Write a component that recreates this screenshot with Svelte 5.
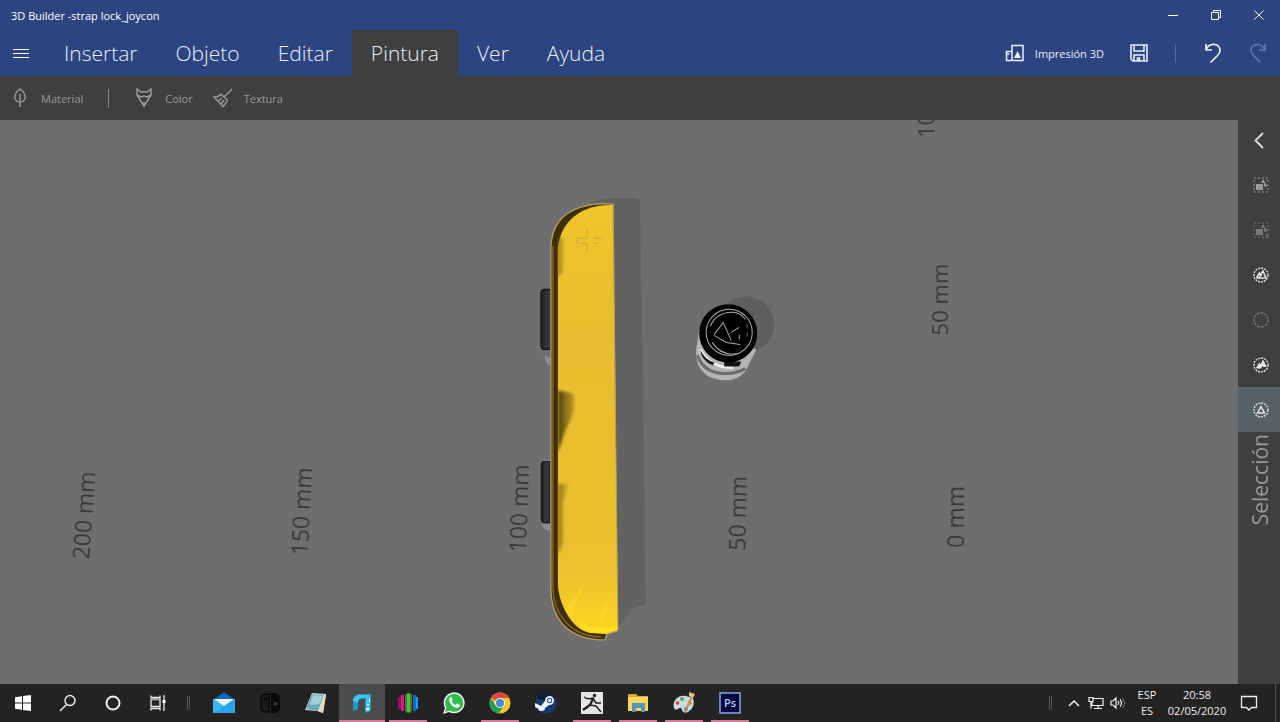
<script>
    let activeTab = $state('Pintura');
    let activeTool = $state('front');

    const tabs = ['Insertar', 'Objeto', 'Editar', 'Pintura', 'Ver', 'Ayuda'];

    const selectionTools = [
        { id: 'all', label: 'Seleccionar todo' },
        { id: 'none', label: 'Anular selección' },
        { id: 'group', label: 'Agrupar' },
        { id: 'ungroup', label: 'Desagrupar' },
        { id: 'multi', label: 'Selección múltiple' },
        { id: 'front', label: 'Selección única' }
    ];

    const rulers = [
        { text: '200 mm', x: 90, y: 560, angle: -86 },
        { text: '150 mm', x: 308, y: 556, angle: -87 },
        { text: '100 mm', x: 526, y: 553, angle: -88 },
        { text: '50 mm', x: 745, y: 551, angle: -89 },
        { text: '0 mm', x: 963, y: 548, angle: -90 },
        { text: '50 mm', x: 947, y: 336, angle: -90, far: true },
        { text: '100 mm', x: 933, y: 139, angle: -90, far: true }
    ];

    const apps = [
        { id: 'mail', label: 'Correo' },
        { id: 'switch', label: 'Switch' },
        { id: 'notepad', label: 'Bloc de notas' },
        { id: 'builder', label: '3D Builder', open: true, active: true },
        { id: 'bars', label: 'Biblioteca', open: true },
        { id: 'whatsapp', label: 'WhatsApp' },
        { id: 'chrome', label: 'Chrome', open: true },
        { id: 'steam', label: 'Steam' },
        { id: 'zbrush', label: 'ZBrush', open: true },
        { id: 'explorer', label: 'Explorador', open: true },
        { id: 'paint', label: 'Paint', open: true },
        { id: 'photoshop', label: 'Photoshop', open: true }
    ];
</script>

<div class="desktop">
    <header class="header">
        <div class="title-bar">
            <span class="title">3D Builder -strap lock_joycon</span>
            <div class="window-buttons">
                <button aria-label="Minimizar">
                    <svg width="12" height="12" viewBox="0 0 12 12"><path d="M1 6.500h10" /></svg>
                </button>
                <button aria-label="Restaurar">
                    <svg width="12" height="12" viewBox="0 0 12 12"><path d="M1.500 3.500h7v7h-7zM3.500 3.500v-2h7v7h-2" /></svg>
                </button>
                <button aria-label="Cerrar">
                    <svg width="12" height="12" viewBox="0 0 12 12"><path d="M1.500 1.500l9 9M10.500 1.500l-9 9" /></svg>
                </button>
            </div>
        </div>

        <div class="menu-bar">
            <button class="hamburger" aria-label="Menú">
                <svg width="16" height="12" viewBox="0 0 16 12"><path d="M0 2.500h16M0 6.500h16M0 10.500h16" /></svg>
            </button>
            <nav class="tabs">
                {#each tabs as tab}
                    <button class="tab" class:active={tab === activeTab} onclick={() => (activeTab = tab)}>{tab}</button>
                {/each}
            </nav>
            <div class="actions">
                <button class="print">
                    <svg width="20" height="20" viewBox="0 0 20 20">
                        <path stroke-width="1.500" d="M7 17.500V2.500h11v15zM7 8.500H1.500v9H7M1.500 11h3" />
                        <path fill="currentColor" stroke="none" d="M12.500 8l3.500 7H9z" />
                    </svg>
                    <span>Impresión 3D</span>
                </button>
                <button aria-label="Guardar">
                    <svg width="20" height="20" viewBox="0 0 20 20">
                        <path stroke-width="1.600" d="M2 2h16v16H4l-2-2zM5 2v6h10V2M5 18v-6h10v6M8.500 18v-3h2v3" />
                    </svg>
                </button>
                <span class="divider"></span>
                <button aria-label="Deshacer">
                    <svg width="20" height="22" viewBox="0 0 20 22">
                        <path stroke-width="1.700" d="M3 2v6h6M3 8C6 0 17 1 17 8.500c0 2-1 3.500-2.500 5L7.500 20.500" />
                    </svg>
                </button>
                <button class="redo" aria-label="Rehacer" disabled>
                    <svg width="20" height="22" viewBox="0 0 20 22">
                        <path stroke-width="1.500" d="M17 2v6h-6M17 8C14 0 3 1 3 8.500c0 2 1 3.500 2.500 5l7 7" />
                    </svg>
                </button>
            </div>
        </div>
    </header>

    <div class="toolbar">
        <button>
            <svg width="20" height="22" viewBox="0 0 20 22">
                <path stroke-width="1.500" d="M10 2C6 5 4.500 8 5 11c.5 3 3 4 5 4s4.500-1 5-4c.5-3-1-6-5-9zM10 7v13" />
            </svg>
            <span>Material</span>
        </button>
        <span class="divider"></span>
        <button>
            <svg width="20" height="22" viewBox="0 0 20 22">
                <path stroke-width="1.500" d="M3 2v6l7 11 7-11V2l-4 3H7L3 2zM3 8l4 2 3-1 3 1 4-2M8 16h4" />
            </svg>
            <span>Color</span>
        </button>
        <button>
            <svg width="20" height="22" viewBox="0 0 20 22">
                <path stroke-width="1.500" d="M19 2l-7.500 7.500M8 7l6.500 6.500M8 7c-1.500 2-4 3-7 3l9 9.500c1.500-2 3.500-4 4.500-6M5 14l4-3M8 17l3-4" />
            </svg>
            <span>Textura</span>
        </button>
    </div>

    <main class="workspace">
        <svg class="scene" viewBox="0 121 1238 563" preserveAspectRatio="xMidYMid slice" role="img" aria-label="Modelo 3D">
            <defs>
                <linearGradient id="body" x1="0" y1="0" x2="0" y2="1">
                    <stop offset="0" stop-color="#f0c42a" />
                    <stop offset="0.3" stop-color="#e7bd2f" />
                    <stop offset="0.85" stop-color="#ecc02e" />
                    <stop offset="1" stop-color="#fdd41f" />
                </linearGradient>
                <linearGradient id="shade">
                    <stop offset="0" stop-color="#493a0a" />
                    <stop offset="1" stop-color="#8b7119" stop-opacity="0.5" />
                </linearGradient>
                <linearGradient id="fade">
                    <stop offset="0" stop-color="#6b5510" stop-opacity="0.7" />
                    <stop offset="1" stop-color="#6b5510" stop-opacity="0" />
                </linearGradient>
                <filter id="soften"><feGaussianBlur stdDeviation="1.500" /></filter>
            </defs>

            {#each rulers as ruler}
                <text class="ruler" class:far={ruler.far} transform="translate({ruler.x} {ruler.y}) rotate({ruler.angle})">{ruler.text}</text>
            {/each}

            <!-- shadows on the bed -->
            <path fill="#626262" d="M590 204Q600 199 612 199L637 199Q640 200 640 208L646 600Q646 606 641 606Q632 606 626 618L617 628Z" />
            <circle cx="746" cy="325" r="28" fill="#5e5e5e" />

            <!-- side rails -->
            <path fill="#8c8c8c" d="M541 348l3 8 7 2v8q-6-2-6-8zM541 523l3 6 7 3v-9z" />
            <path fill="#262626" stroke="#111" d="M551 290h-7q-3 0-3 4v51q0 5 3 5h7z" />
            <path fill="#353535" d="M545 292h5v56h-5z" />
            <path fill="#262626" stroke="#888" d="M551 461h-7q-4 0-4 4v54q0 5 4 5h7z" />
            <path fill="#353535" stroke="#151515" d="M543 462h7v61h-7z" />

            <!-- strap body -->
            <path
                fill="#3d2f09"
                stroke="#b39c6c"
                stroke-width="1.400"
                d="M613 205C602 204 590 205 581 208Q552 217 551 248V588C551 622 571 640 605 640L607 634L617 631Z"
            />
            <path fill="none" stroke="#806326" stroke-width="1.500" d="M553 247V588C554 618 574 637 601 637" />
            <path fill="url(#body)" d="M613 206C575 205 559 229 558 250V583C558 602 571 630 590 633L606 634L618 630Z" />
            <path fill="none" stroke="#b79b51" d="M613 205L618 630" />
            <g filter="url(#soften)">
                <path fill="url(#fade)" d="M558 238h7v32l-7 8z" />
                <path fill="url(#shade)" d="M558 391l16 3v18l-10 23-6 18z" />
                <path fill="url(#fade)" d="M558 484h12l-7 17v42l-5 12z" />
            </g>
            <path fill="#ffe226" opacity="0.4" d="M565 610l20-28-14 34zM598 622l14-34-9 36z" />
            <path fill="#ffe81c" opacity="0.7" d="M575 621q17 10 42 5v4l-13 3-14-1z" />
            <path fill="none" stroke="#c7a63f" d="M587 229v10h-10v5h10v9M594 239h8M594 244h5" />

            <!-- analog stick -->
            <path fill="#b4b4b4" d="M699 330L696 351Q695 371 711 378Q733 386 745 372L756 350Z" />
            <path fill="none" stroke="#6c6c6c" stroke-width="3" d="M697 356Q704 374 724 374Q738 374 745 369" />
            <path fill="none" stroke="#eee" stroke-width="3" d="M700 350Q710 369 733 368" />
            <path fill="#151515" d="M700 350q4 10 14 13l-1 3q-12-5-13-16zM724 362h17l-2 5h-15z" />
            <circle cx="728" cy="334" r="29" fill="#000" />
            <g fill="none" stroke="#aaa">
                <circle cx="729" cy="333" r="23" />
                <path d="M710 327q6-14 22-14 8 0 13 7M712 343q9 14 25 11M714 336l12 7 14 2M714 335l9-12 8 18M731 333l8-5M739 335v5" />
                <path stroke="#666" stroke-dasharray="4 4" d="M747 325v16" />
            </g>
        </svg>

        <aside class="selection">
            <button class="collapse" aria-label="Contraer">
                <svg width="18" height="18" viewBox="0 0 18 18"><path stroke-width="1.800" d="M13 1L5.500 8.500 13 16" /></svg>
            </button>
            {#each selectionTools as tool}
                <button
                    class="tool {tool.id}"
                    class:active={tool.id === activeTool}
                    aria-label={tool.label}
                    onclick={() => (activeTool = tool.id)}
                >
                    <svg width="18" height="18" viewBox="0 0 18 18">
                        {#if tool.id === 'all' || tool.id === 'none'}
                            <path stroke-dasharray="2 2" d="M2 2h14v14H2z" />
                            <path fill="currentColor" stroke="none" d="M4 8h7v6H4zM11 3l4.500 7.500H12V7H9z" />
                            {#if tool.id === 'none'}
                                <path d="M13 13l4 4M17 13l-4 4" />
                            {/if}
                        {:else}
                            <circle cx="9" cy="9" r="7" stroke-width="1.300" stroke-dasharray={tool.id === 'ungroup' ? '3 1' : '2 1'} />
                            {#if tool.id === 'group'}
                                <path stroke-width="1.500" d="M4.500 12l3-5 2 3M7 12l4-7 3 7zM4.500 12H8" />
                            {:else if tool.id === 'multi'}
                                <path fill="currentColor" d="M4.500 12l3-5 1 2.500L11 4.500l3 6h-3l-1-2-1 3.500z" />
                            {:else if tool.id === 'front'}
                                <path stroke-width="1.500" d="M9 5.500l3.500 6.500h-7z" />
                            {/if}
                        {/if}
                    </svg>
                </button>
            {/each}
            <span class="panel-name">Selección</span>
        </aside>
    </main>

    <footer class="taskbar">
        <div class="system">
            <button aria-label="Inicio">
                <svg width="16" height="16" viewBox="0 0 16 16"><path fill="#fff" stroke="none" d="M0 2.300l7-1v6.200H0zM8 1.100L16 0v7.500H8zM0 8.500h7v6.200l-7-1zM8 8.500h8V16l-8-1.100z" /></svg>
            </button>
            <button aria-label="Buscar">
                <svg width="18" height="18" viewBox="0 0 18 18"><circle cx="11" cy="6.500" r="5" stroke-width="1.400" /><path stroke-width="1.400" d="M7.500 10.500L1 17" /></svg>
            </button>
            <button aria-label="Cortana">
                <svg width="18" height="18" viewBox="0 0 18 18"><circle cx="9" cy="9" r="6.500" stroke-width="2" /></svg>
            </button>
            <button aria-label="Vista de tareas">
                <svg width="18" height="18" viewBox="0 0 18 18">
                    <path stroke-width="1.300" d="M2 5.500h9v7H2zM2 1.500v2h9v-2M2 16.500v-2h9v2M15 1v16" />
                    <path fill="#aaa" stroke="none" d="M2 4h9v2H2z" />
                    <path fill="#fff" stroke="none" d="M13.500 6h3v3h-3z" />
                </svg>
            </button>
        </div>
        <span class="grip"></span>
        <div class="apps">
            {#each apps as app}
                <button class="app" class:open={app.open} class:active={app.active} aria-label={app.label}>
                    <svg width="24" height="24" viewBox="0 0 24 24">
                        {#if app.id === 'mail'}
                            <path fill="#1267bd" d="M1 9L12 1l11 8v13H1z" />
                            <path fill="#38b6f0" d="M1 8h22v14H1z" />
                            <path fill="#168be0" d="M1 22l22-14v14z" opacity="0.4" />
                            <path fill="#eaf4fb" d="M2 8h20l-10 7z" />
                        {:else if app.id === 'switch'}
                            <path fill="#1b1b1b" stroke="#090909" stroke-width="1.500" d="M11 3v18H8q-5 0-5-5V8q0-5 5-5z" />
                            <path fill="#090909" d="M13 2h3q6 0 6 6v8q0 6-6 6h-3z" />
                            <circle cx="7.500" cy="8" r="1.800" fill="#090909" />
                            <circle cx="17.500" cy="13" r="2" fill="#383838" />
                        {:else if app.id === 'notepad'}
                            <path fill="#d8dedc" d="M8 2l14 1-3 19-6-2-12-1z" />
                            <path fill="#67aabe" d="M8 3l12 1-6 16-12-2z" />
                            <path fill="#b2dbe1" d="M9 4l10 1-4 8-9 1z" opacity="0.8" />
                            <path fill="#e4d8bf" d="M20 4l2 0-3 18-5-2z" />
                        {:else if app.id === 'builder'}
                            <path fill="#159bc9" d="M3 20V10Q3 4 9 3h12v17l-6 2V8h-3q-4 0-4 4v6z" />
                            <path fill="#4cc4e8" d="M3 9Q4 5 9 4h11l-3 3h-5q-4 0-4 4v1l-5-2zM16 8l4-3v14l-4 2z" />
                            <path fill="#e9faff" d="M16 17h3v2h-3zM19 8h1v3h-1zM17 13h2v1h-2z" />
                        {:else if app.id === 'bars'}
                            <rect x="2" y="6" width="3" height="12" fill="#8d1469" />
                            <rect x="5" y="4" width="3" height="16" fill="#dc168b" />
                            <rect x="9" y="2" width="7" height="20" rx="3" fill="#35842f" />
                            <rect x="11" y="3" width="3" height="18" rx="1" fill="#64b83d" />
                            <rect x="17" y="4" width="3" height="16" fill="#1766cf" />
                            <rect x="20" y="6" width="2" height="12" fill="#1c9ee4" />
                        {:else if app.id === 'whatsapp'}
                            <path fill="#f2f5f2" d="M1 23l2-6a10.500 10.500 0 1 1 4 4z" />
                            <path fill="#32bd4b" d="M3 21l1.500-4.500a9 9 0 1 1 3 3z" />
                            <path fill="#fff" d="M8 6.500q1-1 1.700.3l.8 2-1 1.500q1.500 2.700 4.200 3.800l1.500-1.500 2.500 1.200c.7.500-.2 3-2.500 3C11 17 5.500 11 8 6.500z" />
                        {:else if app.id === 'chrome'}
                            <circle cx="12" cy="12" r="10.500" fill="#f5c92d" />
                            <path fill="#dd4b3c" d="M12 12L2.700 7Q5.500 1.500 12 1.500T21.500 7H12z" />
                            <path fill="#279d55" d="M2.700 7A10.500 10.500 0 0 0 11 22.500l4.500-8L8 15z" />
                            <circle cx="12" cy="12" r="5" fill="#f3f3f3" />
                            <circle cx="12" cy="12" r="4" fill="#4a86d9" />
                        {:else if app.id === 'steam'}
                            <circle cx="12" cy="12" r="10.500" fill="#173b6c" />
                            <path fill="#101f3c" d="M2.500 7.500a10.500 10.500 0 0 1 19 0L12 10z" />
                            <path fill="#f1f5f8" d="M1 12l6 3 4-5a4.500 4.500 0 1 1 4 4l-4 3q0 3-3.500 3-3 0-3.500-2.500L1 16z" />
                            <circle cx="15.500" cy="9.500" r="2.700" fill="#245083" />
                            <circle cx="15.500" cy="9.500" r="1.800" fill="#d9e5ee" />
                        {:else if app.id === 'zbrush'}
                            <path fill="#e5e5e5" d="M1 1h22v22H1z" />
                            <circle cx="14.500" cy="4.500" r="1.700" fill="#222" />
                            <path fill="none" stroke="#222" stroke-width="1.500" d="M4 6q4 3 9 1l3 5h5M10 14l6 1 5 6" />
                            <path fill="none" stroke="#222" stroke-width="2.500" d="M13 8l-3 6-7 5" />
                        {:else if app.id === 'explorer'}
                            <path fill="#dba831" d="M2 3h8l2 2h10v15H2z" />
                            <path fill="#f9d65f" d="M2 6h20v14H2z" />
                            <path fill="#5595b9" d="M6 12h13v9h-4v-4h-5v4H6z" />
                        {:else if app.id === 'paint'}
                            <path fill="#c8dce4" d="M14 5C5 3 0 11 2 17q1 3 4 1 3-3 4 1 1 4 6 2 8-5 5-14z" />
                            <circle cx="10" cy="8" r="2" fill="#5ba25a" />
                            <circle cx="5.500" cy="12" r="1.800" fill="#d64934" />
                            <circle cx="18" cy="12" r="2" fill="#d9912b" />
                            <circle cx="14" cy="18" r="2" fill="#3d7bc0" />
                            <path fill="none" stroke="#c98e49" stroke-width="2" d="M13 21L20 5" />
                            <path fill="#e4bd8a" d="M17 1l6 2-2 4-4-2z" />
                        {:else if app.id === 'photoshop'}
                            <path fill="#08083e" stroke="#80aae0" stroke-width="1.500" d="M2 2h20v20H2z" />
                            <text class="ps" x="12" y="16" text-anchor="middle">Ps</text>
                        {/if}
                    </svg>
                </button>
            {/each}
        </div>

        <div class="tray">
            <span class="grip"></span>
            <button aria-label="Mostrar iconos ocultos">
                <svg width="14" height="14" viewBox="0 0 14 14"><path stroke-width="1.500" d="M2 10l5-5 5 5" /></svg>
            </button>
            <button aria-label="Red">
                <svg width="16" height="14" viewBox="0 0 16 14"><path stroke-width="1.200" d="M5 2.500h10v7H4V6M1 1.500h4v4H1zM3 5.500v7M6 12.500h8M10 9.500v3" /></svg>
            </button>
            <button aria-label="Volumen">
                <svg width="16" height="14" viewBox="0 0 16 14"><path stroke-width="1.200" d="M1 5h2l3-3v10L3 9H1zM8 5q1.500 2 0 4M10 3.500q3 3.500 0 7" /><path stroke="#777" d="M12.500 2q4 5 0 10" /></svg>
            </button>
            <button class="language"><span>ESP</span><span>ES</span></button>
            <button class="clock"><span>20:58</span><span>02/05/2020</span></button>
            <button class="notifications" aria-label="Notificaciones">
                <svg width="18" height="18" viewBox="0 0 18 18"><path stroke-width="1.300" d="M1.500 2.500h15v11h-5L9 16l-2.500-2.500h-5z" /></svg>
            </button>
            <span class="show-desktop"></span>
        </div>
    </footer>
</div>

<style>
    :global(body) {
        margin: 0;
    }

    .desktop {
        display: flex;
        flex-direction: column;
        min-height: 100vh;
        background: #6e6e6e;
        color: #fff;
        font-family: "Open Sans", "Noto Sans", sans-serif;
        font-size: 11px;
    }

    button {
        display: flex;
        align-items: center;
        justify-content: center;
        flex-shrink: 0;
        border: none;
        background: none;
        margin: 0;
        padding: 0;
        color: inherit;
        font: inherit;
    }

    button svg {
        display: block;
        fill: none;
        stroke: currentColor;
    }

    .header {
        background: #2c4480;
    }

    .title-bar {
        display: flex;
        justify-content: space-between;
        align-items: center;
        height: 30px;
        padding-left: 11px;
    }

    .window-buttons {
        display: flex;
        height: 100%;
    }

    .window-buttons button {
        width: 43px;
    }

    .menu-bar {
        display: flex;
        height: 46px;
    }

    .hamburger {
        width: 45px;
        padding-right: 4px;
    }

    .tabs {
        display: flex;
    }

    .tab {
        padding: 0 19px;
        font-size: 21px;
        font-weight: 300;
        color: #e9eefa;
    }

    .tab.active {
        background: #3f3f3f;
    }

    .actions {
        display: flex;
        align-items: center;
        margin-left: auto;
        color: #e9eefa;
    }

    .actions button {
        width: 45px;
        height: 46px;
    }

    .actions .print {
        width: auto;
        gap: 10px;
        padding-right: 12px;
    }

    .divider {
        width: 1px;
        height: 19px;
        background: #858585;
    }

    .actions .divider {
        margin: 0 14px;
        background: #5268a0;
    }

    .actions .redo {
        color: #6278ae;
    }

    .toolbar {
        display: flex;
        align-items: center;
        height: 44px;
        padding-left: 10px;
        background: #3f3f3f;
        color: #999;
    }

    .toolbar button {
        gap: 11px;
    }

    .toolbar button + button {
        margin-left: 20px;
    }

    .toolbar .divider {
        margin: 0 25px;
    }

    .workspace {
        display: flex;
        flex: 1;
    }

    .scene {
        display: block;
        flex: 1;
        min-width: 0;
        background: #6e6e6e;
    }

    .ruler {
        fill: #3b3b3b;
        font-size: 23px;
    }

    .ruler.far {
        font-size: 22px;
    }

    .selection {
        display: flex;
        flex-direction: column;
        align-items: center;
        width: 42px;
        background: #3f3f3f;
        color: #999;
    }

    .selection button {
        width: 100%;
        height: 45px;
        padding-left: 4px;
    }

    .selection .collapse {
        height: 42px;
        padding-left: 0;
        color: #ddd;
    }

    .tool.group,
    .tool.multi,
    .tool.front {
        color: #e6e6e6;
    }

    .tool.none,
    .tool.ungroup {
        color: #777;
    }

    .selection .tool.active {
        background: #566168;
    }

    .panel-name {
        margin: 2px 0 0 2px;
        writing-mode: vertical-rl;
        transform: rotate(180deg);
        font-size: 21px;
        line-height: 40px;
    }

    .taskbar {
        display: flex;
        height: 38px;
        background: #232323;
        color: #eee;
    }

    .system,
    .apps {
        display: flex;
    }

    .system button {
        width: 45px;
    }

    .grip {
        align-self: center;
        width: 1px;
        height: 14px;
        margin: 0 11px 0 7px;
        border: solid #555;
        border-width: 0 1px;
    }

    .app {
        width: 46px;
        box-sizing: border-box;
        position: relative;
    }

    .app svg {
        stroke: none;
    }

    .app.active {
        background: #4c4c4c;
    }

    .app.open::after {
        content: "";
        position: absolute;
        left: 4px;
        right: 4px;
        bottom: 0;
        height: 2px;
        background: #d87a90;
    }

    .app.active::after {
        left: 0;
        right: 0;
    }

    .ps {
        fill: #a3ccff;
        font-size: 11px;
        font-weight: 600;
    }

    .tray {
        display: flex;
        margin-left: auto;
    }

    .tray button {
        width: 22px;
    }

    .tray .language,
    .tray .clock {
        flex-direction: column;
        line-height: 16px;
        width: 36px;
    }

    .tray .clock {
        width: 64px;
    }

    .tray .notifications {
        width: 40px;
    }

    .show-desktop {
        width: 4px;
        margin-left: 6px;
        border-left: 1px solid #555;
    }
</style>
